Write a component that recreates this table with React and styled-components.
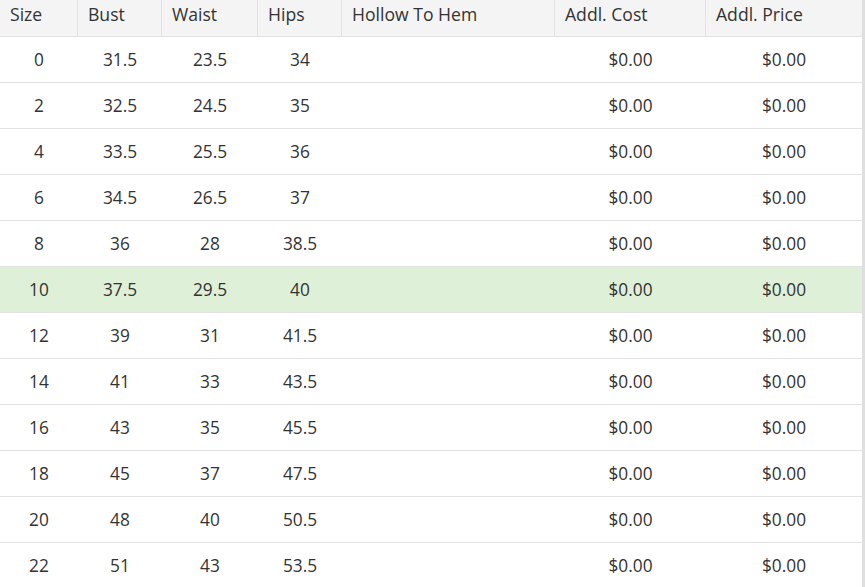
import React from "react";
import styled, { createGlobalStyle } from "styled-components";

const Global = createGlobalStyle`
  html, body { margin: 0; padding: 0; background: #fff; }
  body { font-family: "Open Sans", "Liberation Sans", sans-serif; }
`;

const Frame = styled.div`
  width: 862px;
  border-right: 3px solid #dfdfdf;
  overflow: hidden;
`;

const Table = styled.table`
  width: 862px;
  table-layout: fixed;
  border-collapse: separate;
  border-spacing: 0;
  font-size: 17.3px;
  color: #333;
`;

const HeadCell = styled.th`
  height: 37px;
  box-sizing: border-box;
  padding: 2px 10px 0;
  vertical-align: top;
  text-align: left;
  font-weight: 400;
  font-size: 17.6px;
  background: #f4f4f4;
  border-bottom: 1px solid #e2e2e2;
  border-right: ${(p) => (p.$last ? "none" : "1px solid #e2e2e2")};
  white-space: nowrap;
`;

const Row = styled.tr`
  background: ${(p) => (p.$active ? "#dff0d8" : "#fff")};
`;

const Cell = styled.td`
  height: 45px;
  padding: 0 4px;
  text-align: center;
  vertical-align: middle;
  border-bottom: 1px solid #e2e2e2;
  color: #333;
`;

const columns = [
  { label: "Size", width: 78 },
  { label: "Bust", width: 84 },
  { label: "Waist", width: 96 },
  { label: "Hips", width: 84 },
  { label: "Hollow To Hem", width: 213 },
  { label: "Addl. Cost", width: 151 },
  { label: "Addl. Price", width: 156 },
];

const rows = [
  ["0", "31.5", "23.5", "34"],
  ["2", "32.5", "24.5", "35"],
  ["4", "33.5", "25.5", "36"],
  ["6", "34.5", "26.5", "37"],
  ["8", "36", "28", "38.5"],
  ["10", "37.5", "29.5", "40"],
  ["12", "39", "31", "41.5"],
  ["14", "41", "33", "43.5"],
  ["16", "43", "35", "45.5"],
  ["18", "45", "37", "47.5"],
  ["20", "48", "40", "50.5"],
  ["22", "51", "43", "53.5"],
];

export default function App() {
  return (
    <>
      <Global />
      <Frame>
        <Table>
          <colgroup>
            {columns.map((c) => (
              <col key={c.label} style={{ width: c.width }} />
            ))}
          </colgroup>
          <thead>
            <tr>
              {columns.map((c, i) => (
                <HeadCell key={c.label} $last={i === columns.length - 1}>
                  {c.label}
                </HeadCell>
              ))}
            </tr>
          </thead>
          <tbody>
            {rows.map((r) => (
              <Row key={r[0]} $active={r[0] === "10"}>
                {r.map((v, i) => (
                  <Cell key={i}>{v}</Cell>
                ))}
                <Cell />
                <Cell>$0.00</Cell>
                <Cell>$0.00</Cell>
              </Row>
            ))}
          </tbody>
        </Table>
      </Frame>
    </>
  );
}
